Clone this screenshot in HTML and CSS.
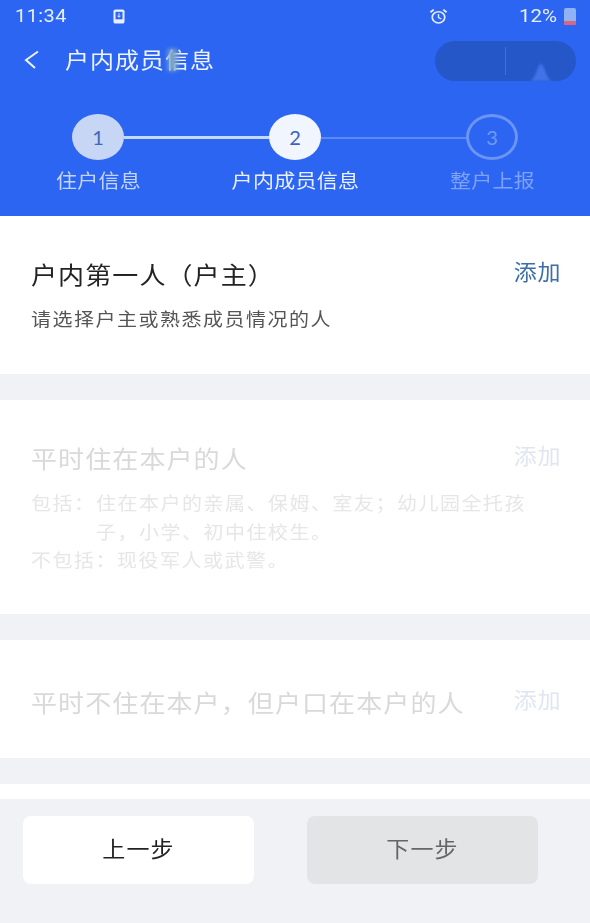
FILE: index.html
```html
<!DOCTYPE html>
<html lang="zh-CN">
<head>
<meta charset="utf-8">
<title>户内成员信息</title>
<link rel="stylesheet" href="styles.css">
</head>
<body>
<div class="screen">
  <header class="header">
    <div class="status">
      <span class="time">11:34</span>
      <svg class="phone-icon" viewBox="0 0 12 16" preserveAspectRatio="none" aria-hidden="true"><rect x="0.5" y="0.5" width="11" height="15" rx="2" fill="#e8f0ff"/><rect x="2.5" y="3" width="7" height="8" fill="#2b65f2"/><path d="M6 4.5v4M4.5 7.2 6 8.8l1.5-1.6" stroke="#e8f0ff" stroke-width="1" fill="none"/></svg>
      <span class="status-right">
        <svg class="alarm-icon" viewBox="0 0 20 20" preserveAspectRatio="none" aria-hidden="true"><circle cx="10" cy="11" r="6.6" fill="none" stroke="#e3edff" stroke-width="1.8"/><path d="M10 7v4.3l3 1.6" fill="none" stroke="#e3edff" stroke-width="1.5"/><path d="M1.5 5 5 1.8M18.5 5 15 1.8" stroke="#e3edff" stroke-width="2"/></svg>
        <span class="battery-text">12%</span>
        <span class="battery"><span class="battery-fill"></span></span>
      </span>
    </div>
    <div class="titlebar">
      <svg class="back" viewBox="0 0 16 22" aria-hidden="true"><path d="M15 1.5 3 10 12 18" fill="none" stroke="#eef3ff" stroke-width="2"/></svg>
      <h1 class="title">户内成员信息<span class="smudge"></span></h1>
      <div class="pill">
        <span class="pill-part"></span>
        <span class="pill-divider"></span>
        <span class="pill-part"><svg class="pill-mark" viewBox="0 0 24 18" aria-hidden="true"><path d="M0 18C7 18 8 1 12 1s5 17 12 17z" fill="#4272e6"/></svg></span>
      </div>
    </div>
    <div class="rail">
      <span class="dot dot-done">1</span>
      <span class="line line-done"></span>
      <span class="dot dot-current">2</span>
      <span class="line"></span>
      <span class="dot dot-next">3</span>
    </div>
    <div class="labels">
      <span class="label label-done">住户信息</span>
      <span class="label label-current">户内成员信息</span>
      <span class="label label-next">整户上报</span>
    </div>
  </header>

  <section class="card card-first">
    <div class="card-head">
      <h2 class="card-title">户内第一人（户主）</h2>
      <a class="add">添加</a>
    </div>
    <p class="desc">请选择户主或熟悉成员情况的人</p>
  </section>

  <section class="card card-second muted">
    <div class="card-head">
      <h2 class="card-title">平时住在本户的人</h2>
      <a class="add">添加</a>
    </div>
    <div class="note">
      <p class="note-row"><span class="note-key">包括：</span><span class="note-text">住在本户的亲属、保姆、室友；幼儿园全托孩子，小学、初中住校生。</span></p>
      <p class="note-row"><span>不包括：现役军人或武警。</span></p>
    </div>
  </section>

  <section class="card card-third muted">
    <div class="card-head">
      <h2 class="card-title">平时不住在本户，但户口在本户的人</h2>
      <a class="add">添加</a>
    </div>
  </section>

  <div class="card card-peek"></div>

  <footer class="footer">
    <button class="btn btn-prev"><span class="btn-text">上一步</span></button>
    <button class="btn btn-next"><span class="btn-text">下一步</span></button>
  </footer>
</div>
</body>
</html>
```

FILE: styles.css
```css
* { box-sizing: border-box; margin: 0; padding: 0; }
html, body { width: 590px; height: 923px; overflow: hidden; }
body { background: #f0f2f6; font-family: "Noto Sans CJK SC", "Noto Sans", sans-serif; }
.screen { display: flex; flex-direction: column; height: 923px; }

/* The reference is stretched horizontally, so text is drawn slightly flattened. */
.time, .battery-text, .title, .label, .card-title, .add, .desc, .btn-text { transform: scaleY(0.92); }

.header { background: #2b65f2; height: 216px; flex: none; color: #fff; display: flex; flex-direction: column; }
.status { height: 32px; display: flex; align-items: center; padding: 0 14px 0 15px; }
.time { font-family: Roboto, sans-serif; font-size: 20px; letter-spacing: 0.4px; color: #e6efff; width: 98px; line-height: 32px; }
.phone-icon { width: 12px; height: 15px; }
.status-right { margin-left: auto; display: flex; align-items: center; }
.alarm-icon { width: 19px; height: 17px; margin-right: 71px; }
.battery-text { font-family: Roboto, sans-serif; font-size: 20.5px; color: #e6efff; margin-right: 7px; }
.battery { width: 12px; height: 17px; border-radius: 2px; background: #8fb2f4; display: flex; align-items: flex-end; overflow: hidden; }
.battery-fill { width: 100%; height: 4px; background: #d9657f; }

.titlebar { height: 58px; display: flex; align-items: center; padding: 0 14px 0 23px; }
.back { width: 16px; height: 22px; margin: 0 26px 0 0; flex: none; }
.title { position: relative; font-size: 24px; font-weight: 400; letter-spacing: 1px; color: #eef3ff; line-height: 32px; margin-bottom: 4px; }
.smudge { position: absolute; left: 103px; top: 5px; width: 9px; height: 24px; background: #7fa8c8; filter: blur(2.5px); }
.pill { margin-left: auto; width: 141px; height: 40px; border-radius: 20px; background: #2557c9; display: flex; align-items: center; overflow: hidden; }
.pill-part { flex: 1; height: 100%; display: flex; justify-content: center; align-items: flex-end; }
.pill-divider { width: 1px; height: 28px; background: #3e6fdd; }
.pill-mark { width: 24px; height: 18px; display: block; filter: blur(1px); }

.rail { margin-top: 24px; height: 46px; padding: 0 72px; display: flex; align-items: center; }
.dot { width: 52px; height: 46px; flex: none; border-radius: 50%; display: flex; align-items: center; justify-content: center; font-family: Lato, sans-serif; font-size: 20px; }
.dot-done { background: #c8d6f5; color: #4468b8; }
.dot-current { background: #f1f5fd; color: #3b62b8; }
.dot-next { border: 3px solid #6b94f3; color: #7099f4; }
.line { flex: 1; height: 2px; margin-top: 1px; background: #5b8af4; }
.line-done { height: 3px; background: #c5d7fa; }

.labels { margin-top: 6px; display: grid; grid-template-columns: repeat(3, 197px); }
.label { text-align: center; font-size: 21px; line-height: 28px; letter-spacing: 0.3px; }
.label-done { color: #c4d5f8; }
.label-current { color: #eaf0fe; }
.label-next { color: #7ea3f5; }

.card { background: #fff; padding: 0 30px 0 31px; flex: none; }
.card-first { height: 158px; padding-top: 40px; }
.card-second { height: 214px; margin-top: 26px; padding-top: 40px; }
.card-third { height: 118px; margin-top: 26px; padding-top: 44px; }
.card-peek { height: 15px; margin-top: 26px; }
.card-head { display: flex; justify-content: space-between; align-items: flex-start; }
.card-title { font-size: 26px; font-weight: 400; letter-spacing: 1.1px; line-height: 36px; color: #232323; }
.add { font-size: 23px; line-height: 32px; letter-spacing: 0.6px; margin: -1px -1px 0 0; color: #3c6ea8; }
.desc { margin-top: 13px; font-size: 20px; letter-spacing: 1.5px; line-height: 28px; color: #555; }

.muted .card-title { color: #d9d9d9; }
.muted .add { color: #dfe6f0; }
.note { margin-top: 12px; font-size: 20px; line-height: 31px; letter-spacing: 1.5px; color: #e6e6e6; transform: scaleY(0.92); transform-origin: top; }
.note-row { display: flex; }
.note-key { flex: none; width: 65px; }
.note-text { width: 440px; }

.footer { flex: 1; background: #f0f2f5; padding: 17px 52px 0 23px; display: flex; justify-content: space-between; align-items: flex-start; }
.btn { width: 231px; height: 68px; border: 0; border-radius: 8px; padding-bottom: 4px; font-family: inherit; font-size: 23px; letter-spacing: 1.2px; }
.btn-text { display: inline-block; }
.btn-prev { background: #fff; color: #222; }
.btn-next { background: #e3e4e6; color: #666; }
```
